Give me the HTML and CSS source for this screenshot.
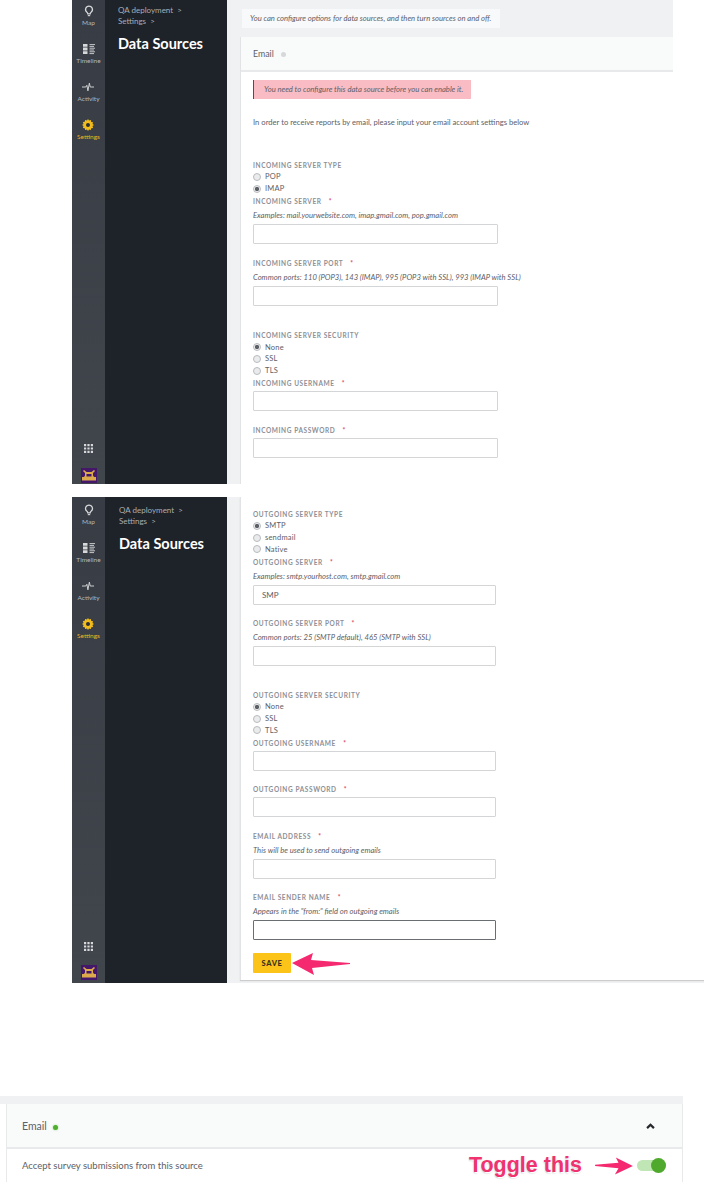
FILE: index.html
```html
<!DOCTYPE html>
<html lang="en">
<head>
    <meta charset="UTF-8">
    <title>Data Sources</title>
    <link rel="stylesheet" href="styles.css">
</head>
<body>
    <svg class="icon-defs" width="0" height="0">
        <symbol id="i-map" viewBox="0 0 12 14"><path d="M6 1.2a4 4 0 0 0-2.4 7.2c.8.6 1 1.2 1 2h2.8c0-.8.2-1.4 1-2A4 4 0 0 0 6 1.2z" fill="none" stroke="currentColor" stroke-width="1.5"/><path d="M4.6 12.4h2.8" stroke="currentColor" stroke-width="1.3"/></symbol>
        <symbol id="i-timeline" viewBox="0 0 12 10"><path d="M0 0h4.5v2.8H0zM0 3.6h4.5v2.8H0zM0 7.2h4.5V10H0z" fill="currentColor"/><path d="M6.5.6H12M6.5 2.4H11M6.5 4.2H12M6.5 6H11M6.5 7.8H12M6.5 9.6H11" stroke="currentColor" stroke-width=".9"/></symbol>
        <symbol id="i-activity" viewBox="0 0 14 10"><path d="M0 5h4.5l1.2-2 1.2 6.5L8.6.5l1 4.5H14" fill="none" stroke="currentColor" stroke-width="1.1"/></symbol>
        <symbol id="i-settings" viewBox="0 0 12 12"><path d="M6 0l1 1.6 1.9-.6.3 1.9 1.9.3-.6 1.9L12 6l-1.5 1 .6 1.9-1.9.3-.3 1.9-1.9-.6L6 12l-1-1.5-1.9.6-.3-1.9-1.9-.3.6-1.9L0 6l1.5-1-.6-1.9 1.9-.3.3-1.9 1.9.6z" fill="currentColor"/><circle cx="6" cy="6" r="2" fill="#2b2f37"/></symbol>
        <symbol id="i-apps" viewBox="0 0 9 9"><path d="M0 0h2.2v2.2H0zM3.4 0h2.2v2.2H3.4zM6.8 0H9v2.2H6.8zM0 3.4h2.2v2.2H0zM3.4 3.4h2.2v2.2H3.4zM6.8 3.4H9v2.2H6.8zM0 6.8h2.2V9H0zM3.4 6.8h2.2V9H3.4zM6.8 6.8H9V9H6.8z" fill="currentColor"/></symbol>
        <symbol id="i-logo" viewBox="0 0 16 15"><path d="M0 0h16v15H0z" fill="#45176b"/><path d="M3 2l2.500 2h5L13 2l1 1-2 2v2.500l1 1.500h2v3.500H1V9h2l1-1.500V5L2 3z" fill="#dcaa4a"/><path d="M5.500 6h5v2.500h-5z" fill="#45176b"/></symbol>
    </svg>

    <!-- first screenshot -->
    <section class="shot shot-first">
        <aside class="rail">
            <a class="rail-item"><svg class="rail-icon"><use href="#i-map"/></svg>Map</a>
            <a class="rail-item"><svg class="rail-icon"><use href="#i-timeline"/></svg>Timeline</a>
            <a class="rail-item"><svg class="rail-icon"><use href="#i-activity"/></svg>Activity</a>
            <a class="rail-item active"><svg class="rail-icon"><use href="#i-settings"/></svg>Settings</a>
            <svg class="rail-apps"><use href="#i-apps"/></svg>
            <svg class="rail-logo"><use href="#i-logo"/></svg>
        </aside>
        <nav class="side">
            <div class="crumb">QA deployment &nbsp;&gt;</div>
            <div class="crumb">Settings &nbsp;&gt;</div>
            <h1>Data Sources</h1>
        </nav>
        <main class="content">
            <p class="note">You can configure options for data sources, and then turn sources on and off.</p>
            <div class="panel">
                <div class="panel-head">Email <span class="dot"></span></div>
                <div class="panel-body">
                    <div class="alert">You need to configure this data source before you can enable it.</div>
                    <p class="intro">In order to receive reports by email, please input your email account settings below</p>

                    <div class="label group">INCOMING SERVER TYPE</div>
                    <div class="radio"><span class="circle"></span>POP</div>
                    <div class="radio"><span class="circle on"></span>IMAP</div>

                    <div class="label tight">INCOMING SERVER <span class="req">*</span></div>
                    <div class="hint">Examples: mail.yourwebsite.com, imap.gmail.com, pop.gmail.com</div>
                    <div class="input"></div>

                    <div class="label field">INCOMING SERVER PORT <span class="req">*</span></div>
                    <div class="hint">Common ports: 110 (POP3), 143 (IMAP), 995 (POP3 with SSL), 993 (IMAP with SSL)</div>
                    <div class="input"></div>

                    <div class="label section-gap">INCOMING SERVER SECURITY</div>
                    <div class="radio"><span class="circle on"></span>None</div>
                    <div class="radio"><span class="circle"></span>SSL</div>
                    <div class="radio"><span class="circle"></span>TLS</div>

                    <div class="label tight">INCOMING USERNAME <span class="req">*</span></div>
                    <div class="input"></div>

                    <div class="label field">INCOMING PASSWORD <span class="req">*</span></div>
                    <div class="input"></div>
                </div>
            </div>
        </main>
    </section>

    <!-- second screenshot -->
    <section class="shot shot-second">
        <aside class="rail">
            <a class="rail-item"><svg class="rail-icon"><use href="#i-map"/></svg>Map</a>
            <a class="rail-item"><svg class="rail-icon"><use href="#i-timeline"/></svg>Timeline</a>
            <a class="rail-item"><svg class="rail-icon"><use href="#i-activity"/></svg>Activity</a>
            <a class="rail-item active"><svg class="rail-icon"><use href="#i-settings"/></svg>Settings</a>
            <svg class="rail-apps"><use href="#i-apps"/></svg>
            <svg class="rail-logo"><use href="#i-logo"/></svg>
        </aside>
        <nav class="side">
            <div class="crumb">QA deployment &nbsp;&gt;</div>
            <div class="crumb">Settings &nbsp;&gt;</div>
            <h1>Data Sources</h1>
        </nav>
        <main class="content">
            <div class="panel panel-full">
                <div class="panel-body narrow">
                    <div class="label">OUTGOING SERVER TYPE</div>
                    <div class="radio"><span class="circle on"></span>SMTP</div>
                    <div class="radio"><span class="circle"></span>sendmail</div>
                    <div class="radio"><span class="circle"></span>Native</div>

                    <div class="label tight">OUTGOING SERVER <span class="req">*</span></div>
                    <div class="hint">Examples: smtp.yourhost.com, smtp.gmail.com</div>
                    <div class="input">SMP</div>

                    <div class="label field-s">OUTGOING SERVER PORT <span class="req">*</span></div>
                    <div class="hint">Common ports: 25 (SMTP default), 465 (SMTP with SSL)</div>
                    <div class="input"></div>

                    <div class="label section-gap">OUTGOING SERVER SECURITY</div>
                    <div class="radio"><span class="circle on"></span>None</div>
                    <div class="radio"><span class="circle"></span>SSL</div>
                    <div class="radio"><span class="circle"></span>TLS</div>

                    <div class="label tight">OUTGOING USERNAME <span class="req">*</span></div>
                    <div class="input"></div>

                    <div class="label field-s">OUTGOING PASSWORD <span class="req">*</span></div>
                    <div class="input"></div>

                    <div class="label field">EMAIL ADDRESS <span class="req">*</span></div>
                    <div class="hint">This will be used to send outgoing emails</div>
                    <div class="input"></div>

                    <div class="label field-s">EMAIL SENDER NAME <span class="req">*</span></div>
                    <div class="hint">Appears in the "from:" field on outgoing emails</div>
                    <div class="input focused"></div>

                    <button class="save">SAVE</button>
                </div>
            </div>
        </main>
        <svg class="arrow arrow-save" viewBox="0 0 58 22"><path d="M0 10L21 0l-2 7 39 3v1l-38 4 2 7z" fill="#f5296f"/></svg>
    </section>

    <!-- third screenshot -->
    <section class="shot-third">
        <div class="third-head">
            <span>Email <span class="dot green"></span></span>
            <svg class="chevron" viewBox="0 0 10 7"><path d="M1 6l4-4 4 4" fill="none" stroke="#26282c" stroke-width="2.600"/></svg>
        </div>
        <div class="third-row">
            <span>Accept survey submissions from this source</span>
            <span class="toggle-wrap">
                <span class="toggle-note">Toggle this</span>
                <svg class="arrow-toggle" viewBox="0 0 42 20"><path d="M0 8.500l26-2-3-6 19 9.500-20 9.500 4-7-26-2.500z" fill="#f5296f"/></svg>
                <span class="toggle"><span class="knob"></span></span>
            </span>
        </div>
    </section>
</body>
</html>
```

FILE: styles.css
```css
body {
    margin: 0;
    background-color: #fff;
    font-family: Lato, "Open Sans", sans-serif;
    color: #5d6067;
    overflow: hidden;
}

.icon-defs {
    position: absolute;
}

.shot {
    display: flex;
    position: relative;
    margin-left: 72px;
}

.shot-first {
    width: 601px;
    height: 484px;
}

.shot-second {
    width: 632px;
    height: 486px;
    margin-top: 13px;
}

/* icon rail */
.rail {
    width: 33px;
    display: flex;
    flex-direction: column;
    align-items: center;
    padding-top: 5px;
    box-sizing: border-box;
    background: linear-gradient(#383c44, #41464d);
    color: #b4b8bd;
}

.shot-second .rail {
    padding-top: 7px;
}

.rail-item {
    display: flex;
    flex-direction: column;
    align-items: center;
    height: 38px;
    font-size: 6.500px;
    line-height: 9px;
}

.rail-item.active {
    color: #e8b923;
}

.rail-icon {
    width: 12px;
    height: 12px;
    margin-bottom: 1px;
    color: #d6d8da;
}

.active .rail-icon {
    color: #f2bd1c;
}

.rail-apps {
    width: 9px;
    height: 9px;
    margin-top: auto;
    color: #d6d8da;
}

.rail-logo {
    width: 16px;
    height: 15px;
    margin: 15px 0 1px;
}

.shot-second .rail-logo {
    margin: 14px 0 3px;
}

/* dark column */
.side {
    width: 122px;
    padding: 5px 0 0 13px;
    box-sizing: border-box;
    background-color: #1e2229;
    color: #a9adb2;
    font-size: 8px;
}

.shot-second .side {
    padding: 8px 0 0 14px;
}

.crumb {
    line-height: 10.500px;
}

.side h1 {
    margin: 9px 0 0;
    color: #fff;
    font-size: 14.500px;
    line-height: 18px;
    font-weight: 700;
}

/* main area */
.content {
    flex: 1;
    padding: 9px 0 0 13px;
    background-color: #f0f1f3;
}

.shot-second .content {
    padding-top: 0;
    padding-bottom: 3px;
}

.note {
    display: inline-block;
    margin: 0 0 9px 2px;
    padding: 0 9px 0 8px;
    background-color: #f8f9fa;
    font-size: 7.650px;
    font-style: italic;
    line-height: 19px;
    vertical-align: top;
}

.panel {
    background-color: #fff;
    border-left: 1px solid #e2e3e5;
}

.shot-first .panel {
    height: 447px;
}

.panel-full {
    height: 483px;
    box-shadow: 0 1px 1px #ccc;
}

.panel-head {
    height: 33px;
    padding-left: 12px;
    background-color: #f9fafa;
    border-bottom: 2px solid #e8e9ea;
    font-size: 8.800px;
    line-height: 34px;
}

.dot {
    display: inline-block;
    width: 5px;
    height: 5px;
    margin-left: 5px;
    border-radius: 50%;
    background-color: #d6d8da;
    vertical-align: 0;
}

.panel-body {
    padding: 8px 12px 0;
}

.panel-body.narrow {
    padding-top: 11px;
}

.alert {
    display: block;
    box-sizing: border-box;
    width: 218px;
    padding-left: 10px;
    background-color: #f9bcc4;
    border-left: 1px solid #a32a3c;
    font-size: 7.650px;
    font-style: italic;
    line-height: 19px;
}

.intro {
    margin: 16px 0 0;
    font-size: 7.650px;
    line-height: 14px;
}

.label {
    margin-bottom: -2px;
    font-size: 6.500px;
    font-weight: 700;
    letter-spacing: 0.6px;
    line-height: 14px;
    color: #8d9096;
}

.group {
    margin-top: 30px;
}

.tight {
    margin-top: 1px;
}

.field {
    margin-top: 13px;
}

.field-s {
    margin-top: 12px;
}

.section-gap {
    margin-top: 23px;
}

.req {
    margin-left: 5px;
    color: #d9466b;
}

.radio {
    display: flex;
    align-items: center;
    height: 11.700px;
    font-size: 7.500px;
    letter-spacing: 0.2px;
}

.circle {
    width: 6px;
    height: 6px;
    margin-right: 4px;
    border: 1px solid #b9bbbe;
    border-radius: 50%;
    background-color: #eaebec;
}

.circle.on {
    background: radial-gradient(#5d6067 45%, #eaebec 55%);
}

.hint {
    margin-top: 1px;
    font-size: 7.650px;
    font-style: italic;
    line-height: 14px;
}

.input {
    box-sizing: border-box;
    width: 245px;
    height: 20px;
    margin-top: 2px;
    padding-left: 8px;
    background-color: #fff;
    border: 1px solid #d4d5d7;
    border-radius: 1px;
    font-size: 8px;
    line-height: 18px;
}

.narrow .input {
    width: 243px;
}

.input.focused {
    border-color: #6a6d72;
}

.save {
    display: block;
    width: 38px;
    height: 20px;
    margin-top: 13px;
    padding: 0;
    background-color: #fcc419;
    border: none;
    border-radius: 1px;
    color: #3a3320;
    font-family: inherit;
    font-size: 7.500px;
    font-weight: 900;
    letter-spacing: 0.6px;
}

.arrow {
    position: absolute;
}

.arrow-save {
    left: 220px;
    top: 456px;
    width: 58px;
    height: 22px;
}

/* third screenshot */
.shot-third {
    width: 683px;
    margin-top: 113px;
    padding: 8px 0 0 6px;
    box-sizing: border-box;
    height: 94px;
    background: linear-gradient(#f0f1f3 8px, #fff 8px);
}

.third-head {
    display: flex;
    justify-content: space-between;
    align-items: center;
    height: 43px;
    padding: 0 27px 0 15px;
    background-color: #f9fafa;
    border-bottom: 2px solid #e8e9ea;
    border-left: 1px solid #e8e9ea;
    border-right: 1px solid #e8e9ea;
    font-size: 10.500px;
}

.dot.green {
    margin-left: 4px;
    background-color: #4fae2e;
    box-shadow: 0 0 2px #8fd477;
}

.chevron {
    width: 9px;
    height: 6px;
}

.third-row {
    display: flex;
    justify-content: space-between;
    align-items: center;
    height: 33px;
    padding: 0 16px 0 15px;
    font-size: 9.500px;
    border-left: 1px solid #e8e9ea;
    border-right: 1px solid #e8e9ea;
}

.toggle-wrap {
    display: flex;
    align-items: center;
}

.toggle-note {
    font-family: "Liberation Sans", Arial, sans-serif;
    font-size: 21.500px;
    font-weight: 700;
    color: #f0326f;
    text-shadow: 1px 1px 0 #fff, 0 1px 2px #b8b8b8;
}

.arrow-toggle {
    width: 42px;
    height: 18px;
    margin: 0 2px 0 11px;
}

.toggle {
    display: block;
    position: relative;
    width: 29px;
    height: 11px;
    border-radius: 6px;
    background-color: #bfe6b4;
}

.knob {
    position: absolute;
    right: 0;
    top: -2px;
    width: 15px;
    height: 15px;
    border-radius: 50%;
    background-color: #4fa92c;
}
```
